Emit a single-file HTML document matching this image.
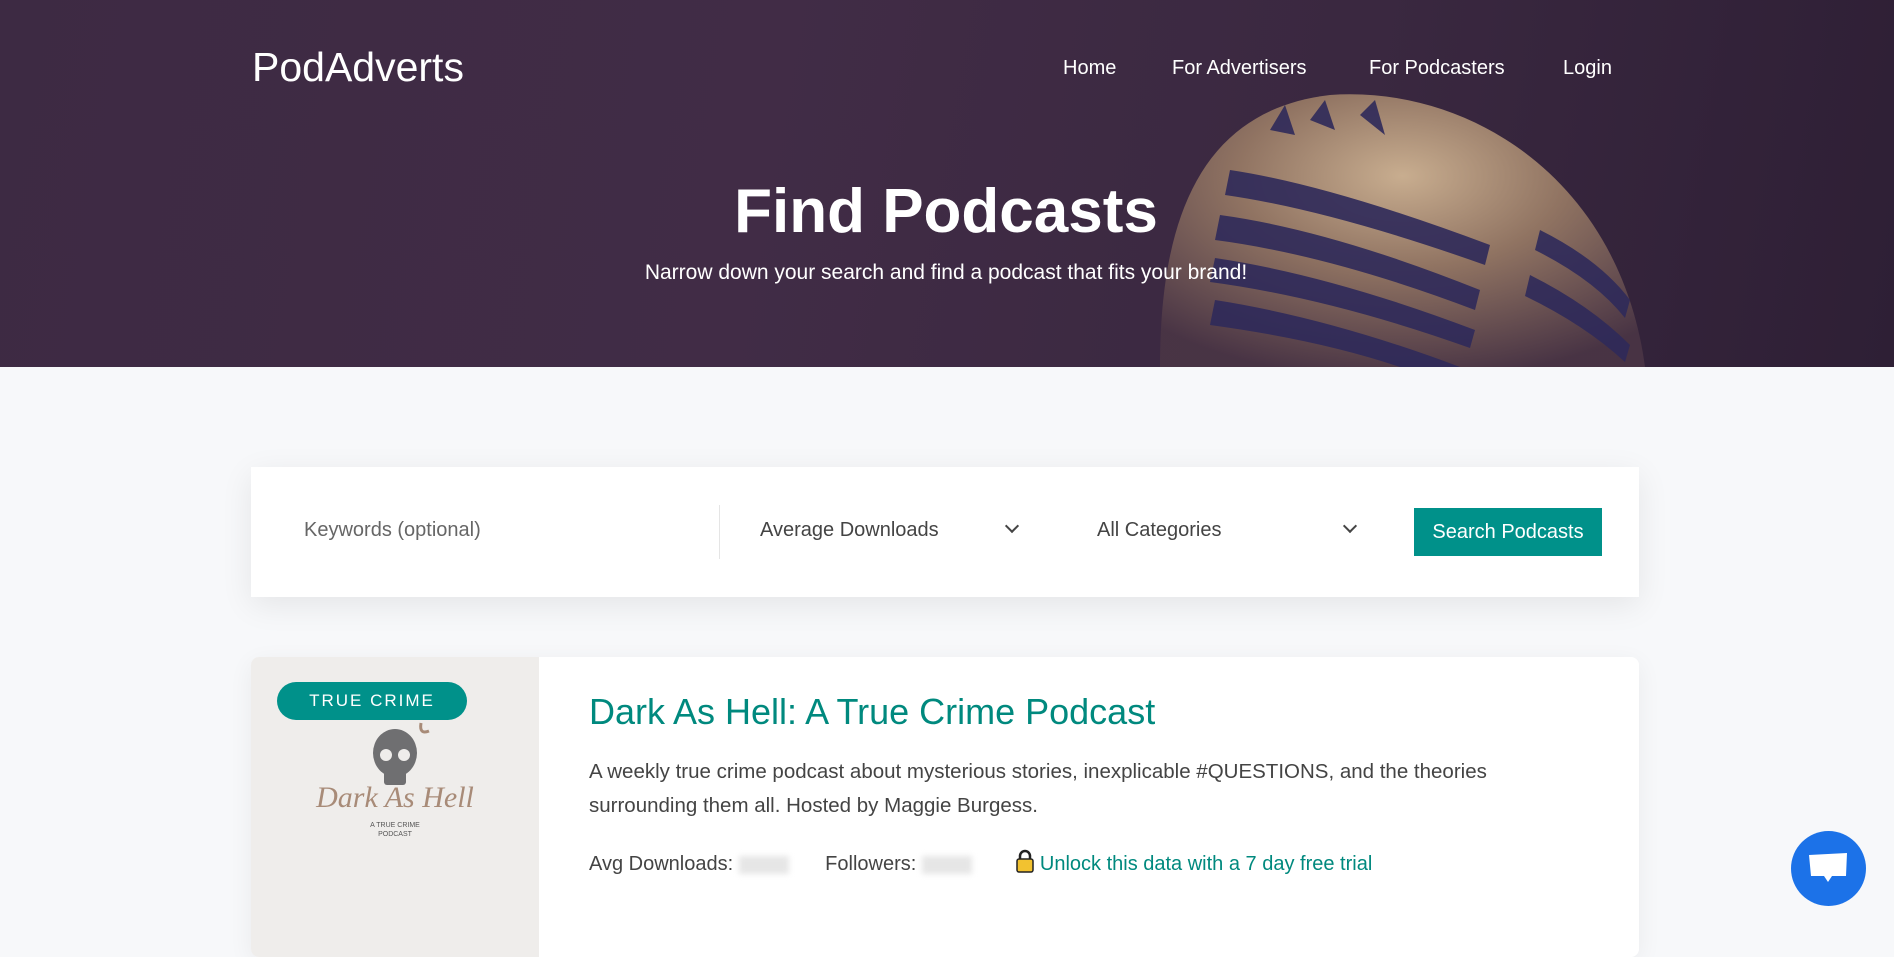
<!DOCTYPE html>
<html><head><meta charset="utf-8"><style>
*{margin:0;padding:0;box-sizing:border-box}
body{width:1894px;height:923px;overflow:hidden;background:#f7f8fa;font-family:"Liberation Sans",sans-serif;position:relative}
.hero{position:absolute;left:0;top:0;width:1894px;height:367px;background:linear-gradient(100deg,#3d2a43 0%,#412c46 40%,#3a2840 70%,#2e1f35 100%);overflow:hidden}
.logo{position:absolute;left:252px;top:44px;color:#fff;font-size:41px}
.nav a{position:absolute;top:57px;color:#fff;font-size:20px;text-decoration:none}
h1{position:absolute;left:0;width:1892px;text-align:center;top:176px;color:#fff;font-size:62px;font-weight:bold}
.sub{position:absolute;left:0;width:1892px;text-align:center;top:261px;color:#fff;font-size:21px}
.search{position:absolute;left:251px;top:467px;width:1388px;height:130px;background:#fff;box-shadow:0 8px 30px rgba(0,0,0,.08)}
.search .t{position:absolute;top:52px;font-size:20px;color:#444}
.chev{position:absolute;top:54px;width:10px;height:10px;border-right:2px solid #444;border-bottom:2px solid #444;transform:rotate(45deg)}
.btn{position:absolute;left:1163px;top:41px;width:188px;height:48px;background:#00918a;color:#fff;font-size:20px;text-align:center;line-height:48px}
.card{position:absolute;left:251px;top:657px;width:1388px;height:300px;background:#fff;border-radius:8px;overflow:hidden;box-shadow:0 6px 25px rgba(0,0,0,.06)}
.img{position:absolute;left:0;top:0;width:288px;height:300px;background:#efedeb}
.badge{position:absolute;left:26px;top:25px;width:190px;height:38px;border-radius:19px;background:#00918a;color:#fff;font-size:17px;letter-spacing:2px;text-align:center;line-height:38px}
.title{position:absolute;left:338px;top:34px;font-size:36px;color:#00897e}
.desc{position:absolute;left:338px;top:98px;width:980px;font-size:20.5px;line-height:34px;color:#444}
.stats{position:absolute;left:338px;top:192px;font-size:20px;color:#444;white-space:nowrap}
.blur{display:inline-block;width:50px;height:18px;background:#e6e6e6;filter:blur(3px);vertical-align:middle;margin-left:6px}
.chat{position:absolute;left:1791px;top:831px;width:75px;height:75px;border-radius:50%;background:#1c72e8}
</style></head><body>
<div class="hero">
<svg width="1894" height="367" style="position:absolute;left:0;top:0">
<defs><radialGradient id="g" cx="0.5" cy="0.3" r="0.75"><stop offset="0" stop-color="#d8bc98"/><stop offset="0.45" stop-color="#9a7c66"/><stop offset="1" stop-color="#4a3545"/></radialGradient></defs>
<path d="M1160 367 C1160 220 1200 110 1330 95 C1470 85 1620 180 1645 367 Z" fill="url(#g)" opacity="0.9"/>
<g fill="#2f2a5a" opacity="0.9">
<path d="M1230 170 Q1330 185 1490 245 L1485 265 Q1330 210 1225 195 Z"/>
<path d="M1220 215 Q1330 230 1480 290 L1475 310 Q1330 255 1215 240 Z"/>
<path d="M1215 258 Q1330 275 1475 330 L1470 348 Q1330 298 1210 282 Z"/>
<path d="M1215 300 Q1330 318 1460 367 L1400 367 Q1320 340 1210 325 Z"/>
<path d="M1540 230 Q1600 260 1630 300 L1625 318 Q1595 280 1535 250 Z"/>
<path d="M1530 275 Q1590 305 1630 345 L1625 362 Q1585 325 1525 296 Z"/>
<path d="M1270 130 L1285 105 L1295 135 Z"/><path d="M1310 120 L1325 100 L1335 130 Z"/><path d="M1360 115 L1375 100 L1385 135 Z"/>
</g>
</svg>
<div class="logo">PodAdverts</div>
<div class="nav"><a style="left:1063px">Home</a><a style="left:1172px">For Advertisers</a><a style="left:1369px">For Podcasters</a><a style="left:1563px">Login</a></div>
<h1>Find Podcasts</h1>
<div class="sub">Narrow down your search and find a podcast that fits your brand!</div>
</div>
<div class="search">
<div class="t" style="left:53px;color:#666">Keywords (optional)</div>
<div style="position:absolute;left:468px;top:38px;width:1px;height:54px;background:#e5e5e5"></div>
<div class="t" style="left:509px">Average Downloads</div><div class="chev" style="left:756px"></div>
<div class="t" style="left:846px">All Categories</div><div class="chev" style="left:1094px"></div>
<div class="btn">Search Podcasts</div>
</div>
<div class="card">
<div class="img">
<svg width="288" height="300" style="position:absolute;left:0;top:0">
<path d="M170 66 Q168 78 178 74" stroke="#a88b78" stroke-width="3" fill="none"/>
<ellipse cx="144" cy="96" rx="22" ry="24" fill="#6f6f71"/>
<rect x="133" y="112" width="22" height="16" rx="3" fill="#6f6f71"/>
<circle cx="135" cy="98" r="6" fill="#efedeb"/><circle cx="153" cy="98" r="6" fill="#efedeb"/>
<text x="144" y="150" text-anchor="middle" font-family="Liberation Serif,serif" font-style="italic" font-size="30" fill="#a88b78">Dark As Hell</text>
<text x="144" y="170" text-anchor="middle" font-size="7" fill="#555">A TRUE CRIME</text>
<text x="144" y="179" text-anchor="middle" font-size="7" fill="#555">PODCAST</text>
</svg>
<div class="badge">TRUE CRIME</div>
</div>
<div class="title">Dark As Hell: A True Crime Podcast</div>
<div class="desc">A weekly true crime podcast about mysterious stories, inexplicable #QUESTIONS, and the theories surrounding them all. Hosted by Maggie Burgess.</div>
<div class="stats">Avg Downloads:<span class="blur"></span><span style="margin-left:36px">Followers:</span><span class="blur"></span>
<span style="margin-left:38px;color:#00897e"><svg width="18" height="24" style="vertical-align:-3px;margin-right:6px"><path d="M4 11 V7 a5 5 0 0 1 10 0 V11" stroke="#222" stroke-width="2.5" fill="none"/><rect x="1" y="10" width="16" height="13" rx="2" fill="#f2c230" stroke="#222" stroke-width="1.5"/></svg>Unlock this data with a 7 day free trial</span></div>
</div>
<div class="chat"><svg width="75" height="75"><path d="M18 24 L56 22 L55 45 L41 45 L37 51 L33 45 L20 45 Z" fill="#fff"/></svg></div>
</body></html>
